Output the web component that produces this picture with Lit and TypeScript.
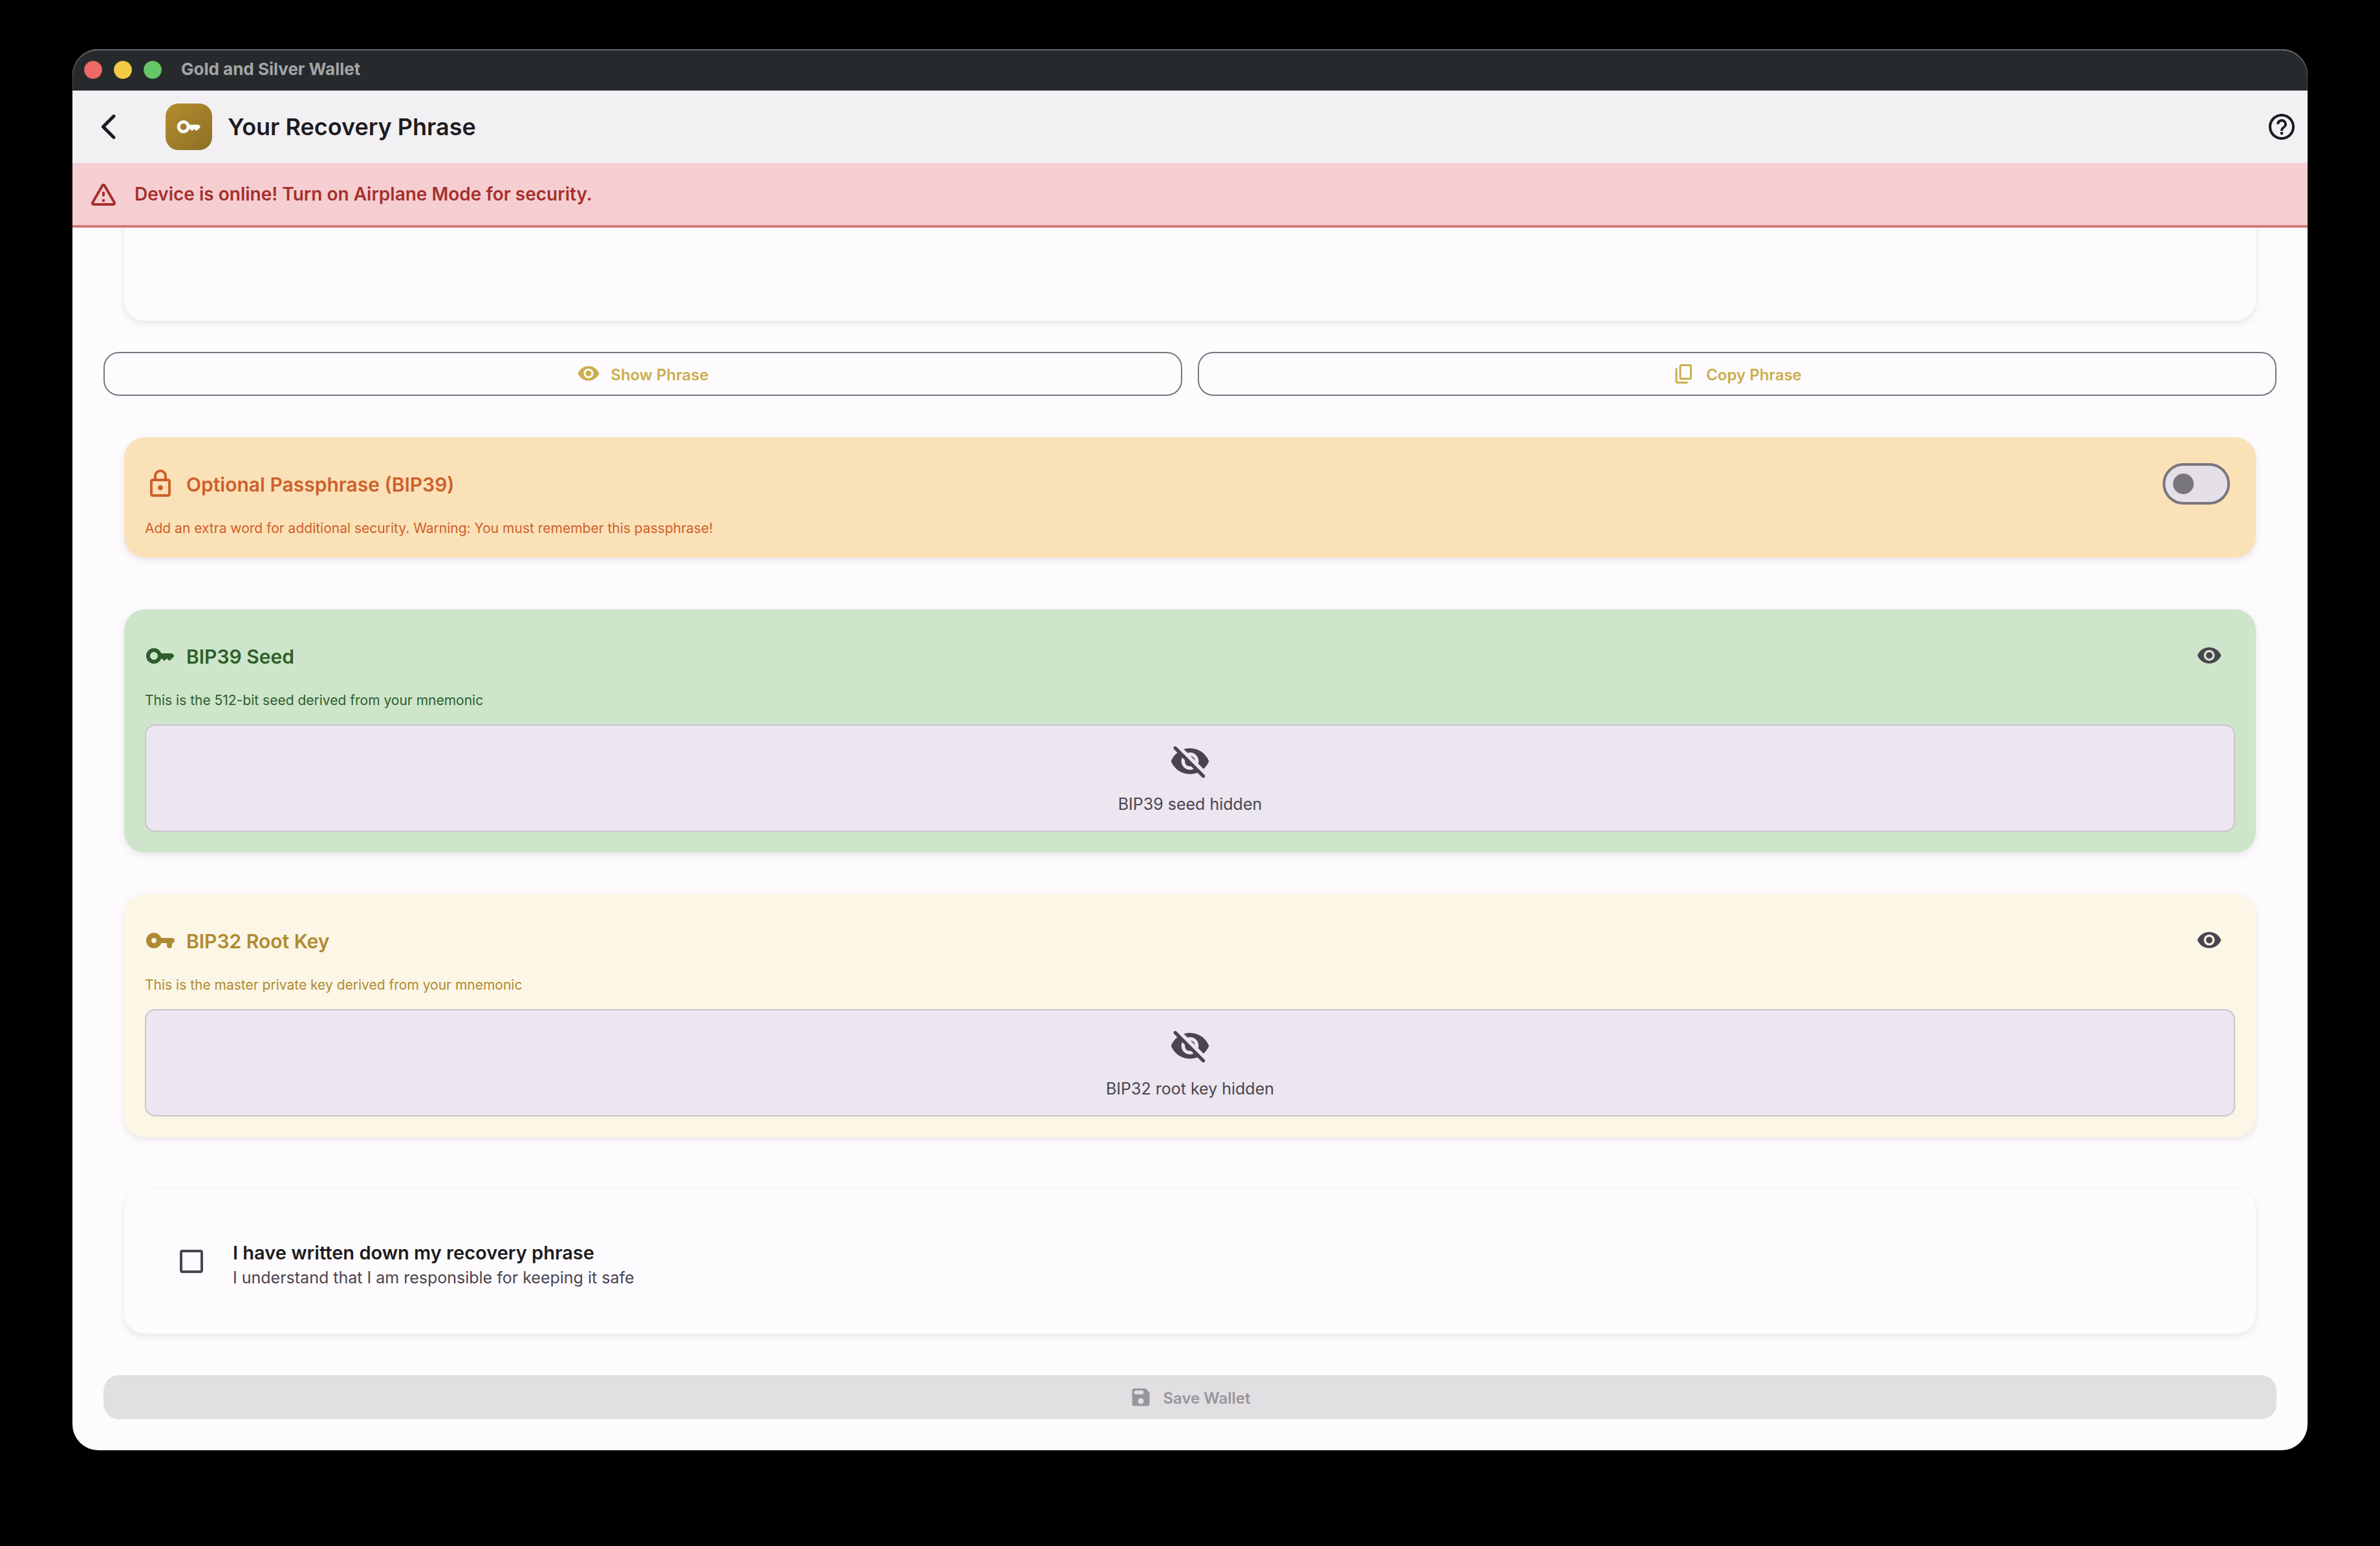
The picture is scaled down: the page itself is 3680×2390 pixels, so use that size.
import { LitElement, html, css, svg } from 'lit';
import { customElement, state } from 'lit/decorators.js';

const ICONS: Record<string, string> = {
  back: 'M16.88 2.88c-.49-.49-1.28-.49-1.77 0L6.7 11.29c-.39.39-.39 1.02 0 1.41l8.41 8.41c.49.49 1.28.49 1.77 0s.49-1.28 0-1.77L9.54 12l7.35-7.35c.48-.49.48-1.28-.01-1.77z',
  key: 'M20.59 10h-7.94C11.7 7.31 8.89 5.5 5.77 6.12c-2.29.46-4.15 2.29-4.63 4.58C.32 14.57 3.26 18 7 18c2.61 0 4.83-1.67 5.65-4H13l1.29 1.29c.39.39 1.02.39 1.41 0L17 14l1.29 1.29c.39.39 1.03.39 1.42 0l2.59-2.61c.39-.39.39-1.03-.01-1.42l-.99-.97c-.2-.19-.45-.29-.71-.29zM7 15c-1.65 0-3-1.35-3-3s1.35-3 3-3 3 1.35 3 3-1.35 3-3 3z',
  vpnKey: 'M12.65 10C11.7 7.31 8.9 5.5 5.77 6.12c-2.29.46-4.15 2.29-4.63 4.58C.32 14.57 3.26 18 7 18c2.61 0 4.83-1.67 5.65-4H17v2c0 1.1.9 2 2 2s2-.9 2-2v-2c1.1 0 2-.9 2-2s-.9-2-2-2h-8.35zM7 14c-1.1 0-2-.9-2-2s.9-2 2-2 2 .9 2 2-.9 2-2 2z',
  help: 'M11 16h2v2h-2zM12 2C6.48 2 2 6.48 2 12s4.48 10 10 10 10-4.48 10-10S17.52 2 12 2zm0 18c-4.41 0-8-3.59-8-8s3.59-8 8-8 8 3.59 8 8-3.59 8-8 8zm-.71-13.93c-1.56.28-2.75 1.43-3.14 2.86-.17.6.29 1.2.92 1.2h.2c.41 0 .74-.29.88-.67.32-.89 1.27-1.5 2.3-1.28.95.2 1.65 1.13 1.57 2.1-.1 1.34-1.62 1.63-2.45 2.88 0 .01-.01.01-.01.02-.01.02-.02.03-.03.05-.09.15-.18.32-.25.5-.01.03-.03.05-.04.08-.01.02-.01.04-.02.07-.12.34-.2.75-.2 1.25h2c0-.42.11-.77.28-1.07.02-.03.03-.06.05-.09.08-.14.18-.27.28-.39.01-.01.02-.03.03-.04.1-.12.21-.23.33-.34.96-.91 2.26-1.65 1.99-3.56-.24-1.74-1.61-3.21-3.35-3.47-.45-.07-.9-.06-1.34-.1z',
  warning: 'M12 5.99 19.53 19H4.47L12 5.99M2.74 18c-.77 1.33.19 3 1.73 3h15.06c1.54 0 2.5-1.67 1.73-3L13.73 4.99c-.77-1.33-2.69-1.33-3.46 0L2.74 18zM11 11v2c0 .55.45 1 1 1s1-.45 1-1v-2c0-.55-.45-1-1-1s-1 .45-1 1zm0 5h2v2h-2v-2z',
  eye: 'M12 4C7 4 2.73 7.11 1 11.5 2.73 15.89 7 19 12 19s9.27-3.11 11-7.5C21.27 7.11 17 4 12 4zm0 12.5c-2.76 0-5-2.24-5-5s2.24-5 5-5 5 2.24 5 5-2.24 5-5 5zm0-8c-1.66 0-3 1.34-3 3s1.34 3 3 3 3-1.34 3-3-1.34-3-3-3z',
  eyeOff: 'M12 6.5c2.76 0 5 2.24 5 5 0 .51-.1 1-.24 1.46l3.06 3.06c1.39-1.23 2.49-2.77 3.18-4.53C21.27 7.11 17 4 12 4c-1.27 0-2.49.2-3.64.57l2.17 2.17c.47-.14.96-.24 1.47-.24zM2.71 3.16c-.39.39-.39 1.02 0 1.41l1.97 1.97C3.06 7.83 1.77 9.53 1 11.5 2.73 15.89 7 19 12 19c1.52 0 2.97-.3 4.31-.82l2.72 2.72c.39.39 1.02.39 1.41 0 .39-.39.39-1.02 0-1.41L4.13 3.16c-.39-.39-1.03-.39-1.42 0zM12 16.5c-2.76 0-5-2.24-5-5 0-.77.18-1.5.49-2.14l1.57 1.57c-.03.18-.06.37-.06.57 0 1.66 1.34 3 3 3 .2 0 .38-.03.57-.07L14.14 16c-.65.32-1.37.5-2.14.5zm2.97-5.33c-.15-1.4-1.25-2.49-2.64-2.64l2.64 2.64z',
  copy: 'M18 2H9c-1.1 0-2 .9-2 2v12c0 1.1.9 2 2 2h9c1.1 0 2-.9 2-2V4c0-1.1-.9-2-2-2zm0 14H9V4h9v12zM3 15V7c0-.55.45-1 1-1s1 .45 1 1v13h10c.55 0 1 .45 1 1s-.45 1-1 1H5c-1.1 0-2-.9-2-2v-5z',
  lock: 'M18 8h-1V6c0-2.76-2.24-5-5-5S7 3.24 7 6v2H6c-1.1 0-2 .9-2 2v10c0 1.1.9 2 2 2h12c1.1 0 2-.9 2-2V10c0-1.1-.9-2-2-2zM9 6c0-1.66 1.34-3 3-3s3 1.34 3 3v2H9V6zm9 14H6V10h12v10zm-6-3c1.1 0 2-.9 2-2s-.9-2-2-2-2 .9-2 2 .9 2 2 2z',
  save: 'M17.59 3.59c-.38-.38-.89-.59-1.42-.59H5c-1.11 0-2 .9-2 2v14c0 1.1.9 2 2 2h14c1.1 0 2-.9 2-2V7.83c0-.53-.21-1.04-.59-1.41l-2.82-2.83zM12 19c-1.66 0-3-1.34-3-3s1.34-3 3-3 3 1.34 3 3-1.34 3-3 3zm1-10H7c-1.1 0-2-.9-2-2s.9-2 2-2h6c1.1 0 2 .9 2 2s-.9 2-2 2z',
};

const icon = (name: string, size: 's' | 'm' | 'l' | 'xl' = 'l') => html`
  <svg class="icon ${size}" viewBox="0 0 24 24" aria-hidden="true">${svg`<path fill="currentColor" d=${ICONS[name]}></path>`}</svg>`;

interface Secret {
  tone: string;
  icon: string;
  title: string;
  note: string;
  hidden: string;
}

const SECRETS: Secret[] = [
  {
    tone: 'green',
    icon: 'key',
    title: 'BIP39 Seed',
    note: 'This is the 512-bit seed derived from your mnemonic',
    hidden: 'BIP39 seed hidden',
  },
  {
    tone: 'gold',
    icon: 'vpnKey',
    title: 'BIP32 Root Key',
    note: 'This is the master private key derived from your mnemonic',
    hidden: 'BIP32 root key hidden',
  },
];

@customElement('app-root')
export class AppRoot extends LitElement {
  @state() private written = false;

  static styles = css`
    :host {
      display: flex;
      box-sizing: border-box;
      min-height: 100vh;
      padding: 76px 112px 148px;
      background: #000;
      font-family: Inter, 'Liberation Sans', sans-serif;
      color: #1c1b20;
    }
    *, *::before, *::after { box-sizing: border-box; }
    h1, h2, p { margin: 0; font: inherit; }
    button {
      display: flex;
      align-items: center;
      justify-content: center;
      margin: 0;
      padding: 0;
      border: 0;
      background: none;
      font: inherit;
      color: inherit;
    }
    .icon { display: block; flex: none; }
    .icon.s { width: 36px; height: 36px; }
    .icon.m { width: 40px; height: 40px; }
    .icon.l { width: 48px; height: 48px; }
    .icon.xl { width: 64px; height: 64px; }

    .window {
      flex: 1;
      display: flex;
      flex-direction: column;
      min-width: 0;
      border-radius: 40px;
      overflow: hidden;
      background: #fdfbfe;
    }

    .titlebar {
      display: flex;
      align-items: center;
      gap: 30px;
      height: 64px;
      padding: 0 18px;
      background: #262a2c;
      border-radius: 40px 40px 0 0;
      box-shadow: inset 0 2px 0 #63676a, inset 1px 0 0 #4c5053, inset -1px 0 0 #4c5053;
      font-size: 26px;
      font-weight: 700;
      line-height: 32px;
      color: #a2a5a7;
    }
    .name { padding-bottom: 2px; }
    .lights { display: flex; gap: 18px; }
    .light {
      width: 28px;
      height: 28px;
      border-radius: 50%;
      border: 1px solid rgba(0, 0, 0, 0.12);
    }
    .light.close { background: #ed6a66; }
    .light.minimize { background: #f5ca45; }
    .light.zoom { background: #66c766; }

    .appbar {
      display: flex;
      align-items: center;
      height: 112px;
      background: #f2f0f3;
    }
    .back { width: 112px; height: 112px; }
    .badge {
      display: flex;
      align-items: center;
      justify-content: center;
      width: 72px;
      height: 72px;
      margin: 0 24px 0 32px;
      border-radius: 20px;
      background: linear-gradient(135deg, #b48c2e, #8d7024);
      color: #fff;
    }
    .appbar h1 { flex: 1; font-size: 36px; font-weight: 600; line-height: 44px; }
    .tap { flex: none; width: 80px; height: 80px; }

    .banner {
      display: flex;
      align-items: center;
      gap: 24px;
      height: 100px;
      padding: 0 24px;
      border-bottom: 4px solid #d47a78;
      background: #f6ced2;
      font-size: 28px;
      font-weight: 600;
      line-height: 36px;
      color: #a5302c;
    }

    .scroll {
      flex: 1;
      display: flex;
      flex-direction: column;
      min-height: 0;
      padding: 0 48px 48px;
      overflow: hidden;
    }
    .card {
      margin: 0 32px;
      padding: 32px;
      border-radius: 32px;
      background: #fdfbfe;
      box-shadow: 0 4px 12px rgba(0, 0, 0, 0.09);
    }
    .phrase { height: 192px; margin-top: -48px; }
    .orange { margin-bottom: 80px; background: #fae1b8; color: #cf5f2a; }
    .green { margin-bottom: 64px; background: #cee5cb; color: #2e5f2a; }
    .gold { margin-bottom: 80px; background: #fbf6e5; color: #b08a32; }

    .actions { display: grid; grid-template-columns: 1fr 1fr; gap: 24px; margin: 48px 0 64px; }
    .btn {
      gap: 16px;
      height: 68px;
      border-radius: 24px;
      font-size: 24px;
      font-weight: 600;
      line-height: 32px;
    }
    .btn span { padding-top: 4px; }
    .outlined { border: 2px solid #79757d; color: #cbae4e; }
    .save { background: #e1dfe2; color: #98969b; }

    .head { display: flex; align-items: center; gap: 16px; height: 80px; }
    .head h2 { flex: 1; padding-top: 2px; font-size: 30px; font-weight: 600; line-height: 36px; }
    .head .tap { color: #49454f; }
    .note { margin-top: 16px; font-size: 21px; line-height: 26px; }

    .switch {
      appearance: none;
      display: flex;
      align-items: center;
      width: 104px;
      height: 64px;
      margin: 0 8px;
      padding: 0 12px;
      border: 4px solid #79757d;
      border-radius: 32px;
      background: #e5e0e8;
    }
    .switch::before {
      content: '';
      width: 32px;
      height: 32px;
      border-radius: 50%;
      background: #79757d;
    }
    .switch:checked { justify-content: flex-end; }

    .vault {
      display: flex;
      flex-direction: column;
      align-items: center;
      gap: 16px;
      margin-top: 24px;
      padding: 24px;
      border: 2px solid #c9c4cd;
      border-radius: 16px;
      background: #ebe6f0;
      font-size: 25px;
      line-height: 34px;
      color: #49454f;
    }

    .confirm {
      display: flex;
      align-items: flex-start;
      gap: 32px;
      margin-bottom: 64px;
      padding: 80px 72px 68px;
    }
    .check { display: grid; place-items: center; width: 64px; height: 64px; }
    .check input {
      appearance: none;
      width: 36px;
      height: 36px;
      margin: 0;
      border: 4px solid #49454f;
      border-radius: 4px;
    }
    .check input:checked { background: #49454f; }
    .confirm strong, .confirm small { display: block; line-height: 38px; }
    .confirm strong { font-size: 29px; font-weight: 600; }
    .confirm small { font-size: 25px; color: #49454f; }
  `;

  private secret(s: Secret) {
    return html`
      <section class="card ${s.tone}">
        <div class="head">
          ${icon(s.icon)}
          <h2>${s.title}</h2>
          <button class="tap" aria-label="Show ${s.title}">${icon('eye', 'm')}</button>
        </div>
        <p class="note">${s.note}</p>
        <div class="vault">${icon('eyeOff', 'xl')}<p>${s.hidden}</p></div>
      </section>`;
  }

  render() {
    return html`
      <div class="window">
        <div class="titlebar">
          <div class="lights">
            <span class="light close"></span><span class="light minimize"></span><span class="light zoom"></span>
          </div>
          <span class="name">Gold and Silver Wallet</span>
        </div>
        <header class="appbar">
          <button class="back" aria-label="Back">${icon('back')}</button>
          <div class="badge">${icon('key', 'm')}</div>
          <h1>Your Recovery Phrase</h1>
          <button class="tap" aria-label="Help">${icon('help')}</button>
        </header>
        <div class="banner" role="alert">
          ${icon('warning')}
          <p>Device is online! Turn on Airplane Mode for security.</p>
        </div>
        <main class="scroll">
          <section class="card phrase"></section>
          <div class="actions">
            <button class="btn outlined">${icon('eye', 's')}<span>Show Phrase</span></button>
            <button class="btn outlined">${icon('copy', 's')}<span>Copy Phrase</span></button>
          </div>
          <section class="card orange">
            <div class="head">
              ${icon('lock')}
              <h2><label for="passphrase">Optional Passphrase (BIP39)</label></h2>
              <input class="switch" id="passphrase" type="checkbox" role="switch" />
            </div>
            <p class="note">Add an extra word for additional security. Warning: You must remember this passphrase!</p>
          </section>
          ${SECRETS.map((s) => this.secret(s))}
          <label class="card confirm" for="written">
            <span class="check">
              <input
                id="written"
                type="checkbox"
                .checked=${this.written}
                @change=${(e: Event) => (this.written = (e.target as HTMLInputElement).checked)}
              />
            </span>
            <span>
              <strong>I have written down my recovery phrase</strong>
              <small>I understand that I am responsible for keeping it safe</small>
            </span>
          </label>
          <button class="btn save" ?disabled=${!this.written}>${icon('save', 's')}<span>Save Wallet</span></button>
        </main>
      </div>`;
  }
}
